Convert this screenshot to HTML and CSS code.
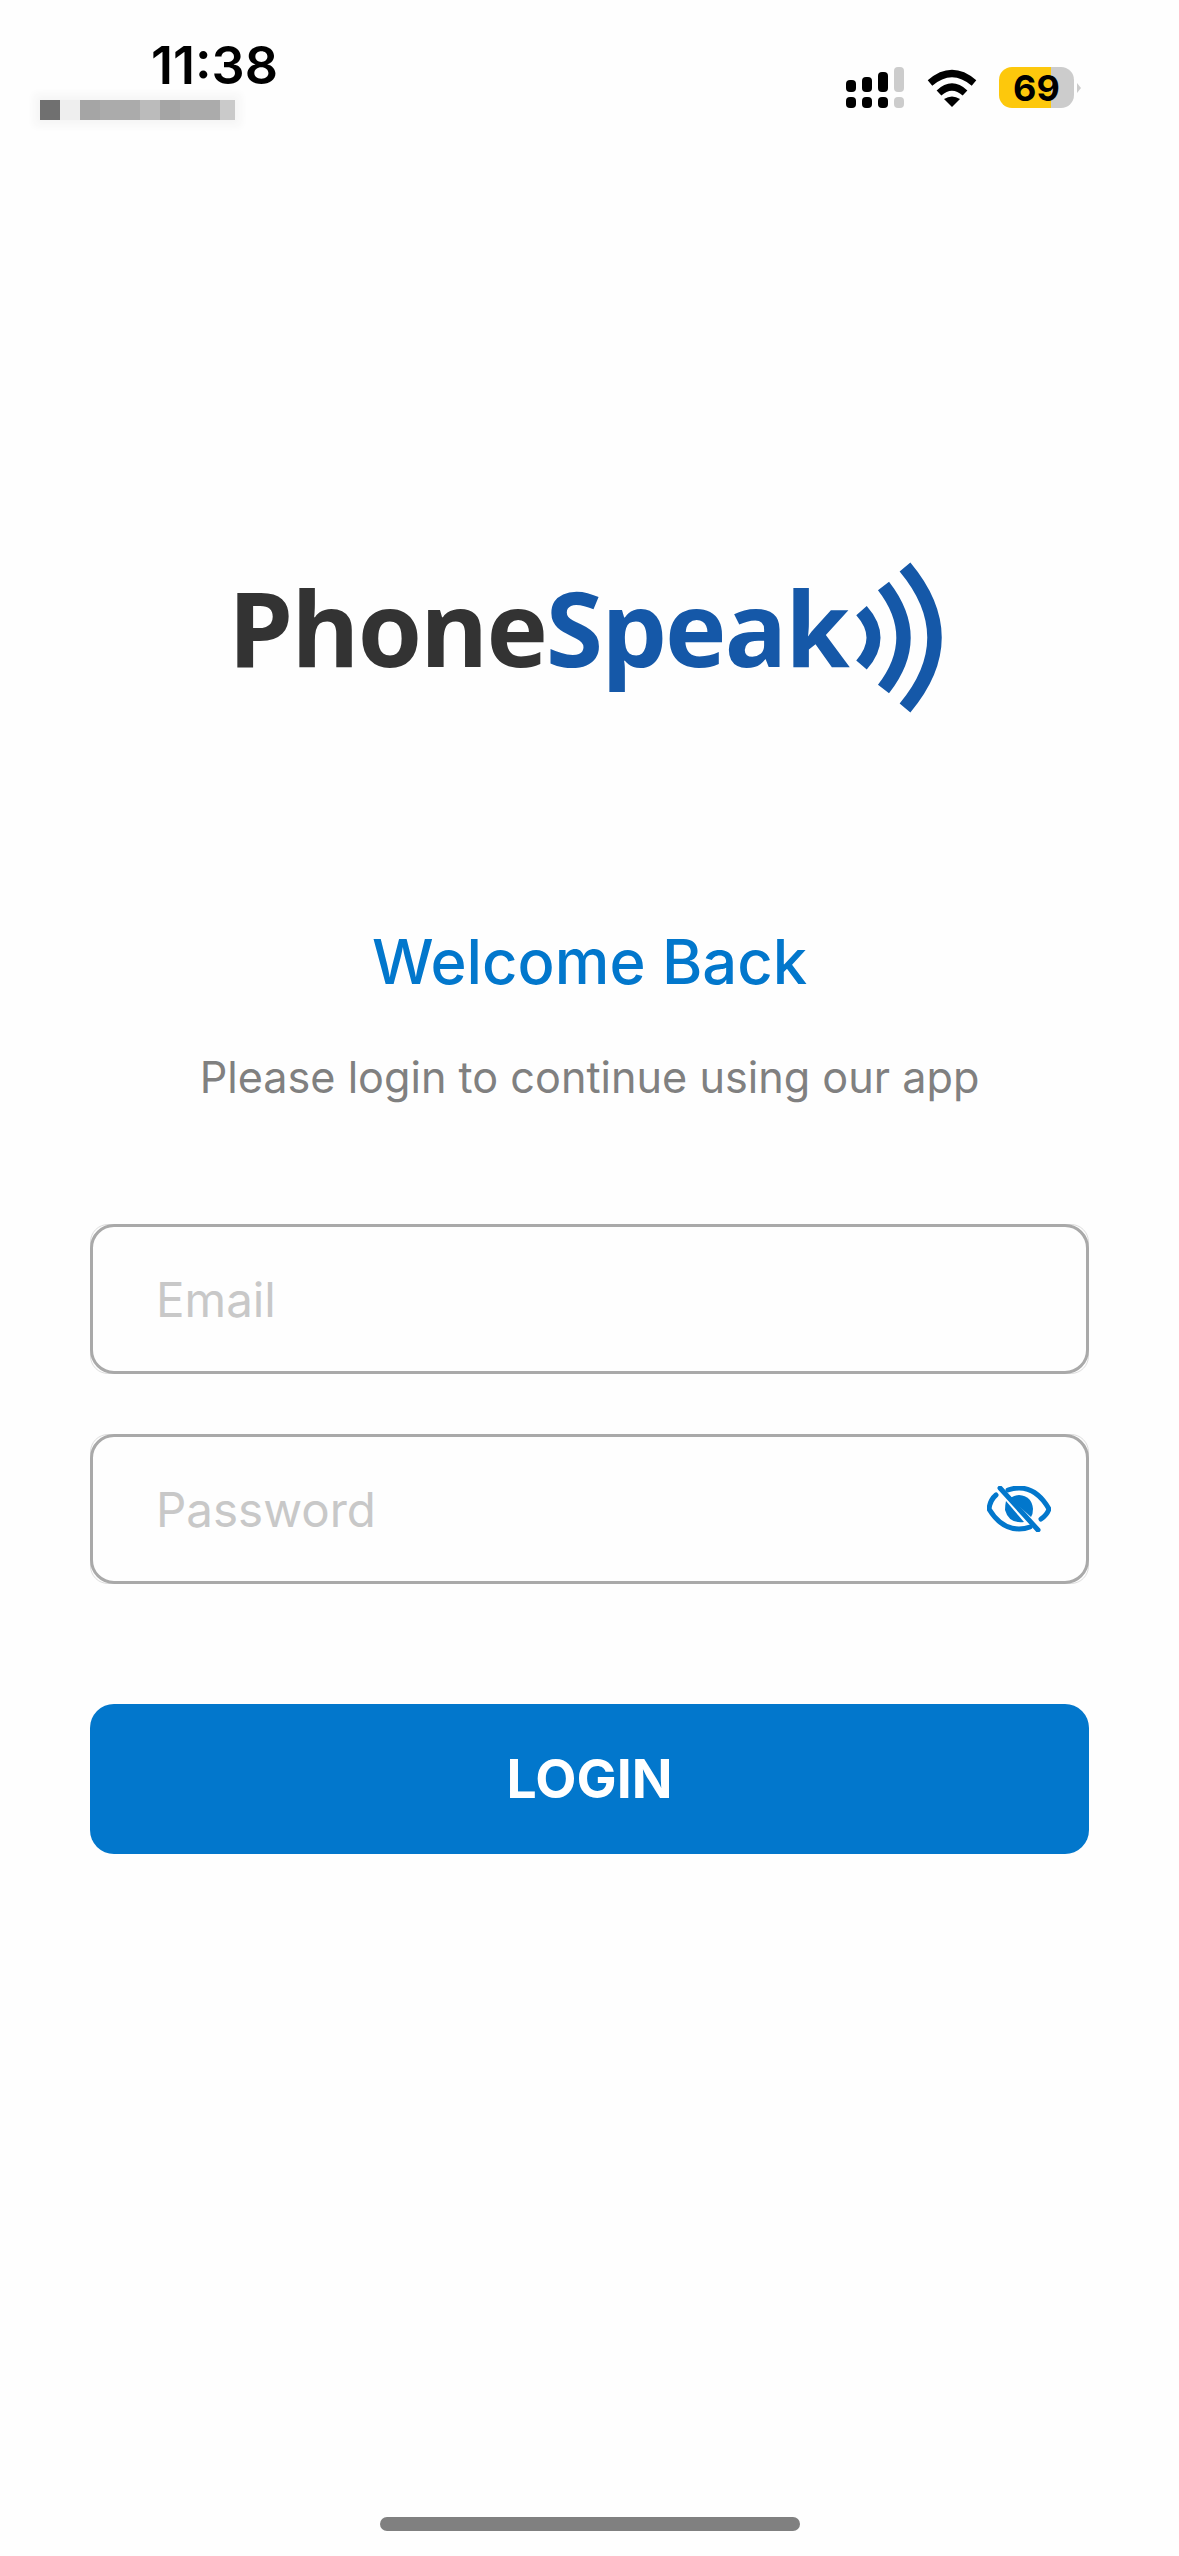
FILE: index.html
```html
<!DOCTYPE html>
<html lang="en">
  <head>
    <meta charset="UTF-8">
    <meta name="viewport" content="width=device-width, initial-scale=1.0">
    <title>Login | PhoneSpeak</title>
    <link rel="stylesheet" href="styles.css">
  </head>
  <body>
    <!-- Status bar -->
    <div class="status-bar">
      <div class="status-left">
        <div class="time">11:38</div>
        <div class="carrier">
          <span class="px px-dark"></span>
          <span class="px px-pale"></span>
          <span class="px px-mid"></span>
          <span class="px px-wide"></span>
          <span class="px px-soft"></span>
          <span class="px px-mid"></span>
          <span class="px px-wide"></span>
          <span class="px px-end"></span>
        </div>
      </div>
      <div class="status-right">
        <svg class="signal" width="58" height="41" viewBox="0 0 58 41">
          <rect x="0" y="13" width="10" height="12" rx="4"/>
          <rect x="16" y="10" width="10" height="15" rx="4"/>
          <rect x="32" y="5" width="10" height="20" rx="4"/>
          <rect x="48" y="0" width="10" height="25" rx="4" fill="#cccccc"/>
          <rect x="0" y="30" width="10" height="11" rx="4"/>
          <rect x="16" y="30" width="10" height="11" rx="4"/>
          <rect x="32" y="30" width="10" height="11" rx="4"/>
          <rect x="48" y="30" width="10" height="11" rx="4" fill="#cccccc"/>
        </svg>
        <svg class="wifi" width="50" height="38" viewBox="0 0 50 38">
          <path d="M3 14 Q25 -5 47 14" fill="none" stroke="#000" stroke-width="7"/>
          <path d="M12 24 Q25 12 38 24" fill="none" stroke="#000" stroke-width="7"/>
          <path d="M17 30 Q25 25 33 30 L25 38 Z"/>
        </svg>
        <div class="battery">
          <div class="battery-body"><span>69</span></div>
          <div class="battery-tip"></div>
        </div>
      </div>
    </div>

    <!-- Logo -->
    <div class="logo">
      <div class="logo-text">Phone<span>Speak</span></div>
      <svg class="logo-waves" width="90" height="156" viewBox="0 0 90 156">
        <path d="M5.5 50.7 Q29.5 77.7 5.5 105"/>
        <path d="M27.5 26 Q67.5 77.7 27.5 129"/>
        <path d="M49 7 Q108 77.7 49 148"/>
      </svg>
    </div>

    <!-- Form -->
    <div class="login">
      <h1>Welcome Back</h1>
      <p>Please login to continue using our app</p>
      <div class="field">
        <input type="text" placeholder="Email">
      </div>
      <div class="field">
        <input type="password" placeholder="Password">
        <svg class="eye" width="64" height="46" viewBox="0 0 64 46">
          <path d="M9 9 Q3 14 2 23 Q14 43 32 43 Q38 43 43 41" fill="none" stroke="#0277cc" stroke-width="5" stroke-linecap="round"/>
          <path d="M21 4 Q27 2 32 2 Q50 2 62 23 Q60 29 54 33" fill="none" stroke="#0277cc" stroke-width="5" stroke-linecap="round"/>
          <path d="M23 12 Q28 9 32 9 Q45 10 46 23 Q46 28 44 31 Z" fill="#0277cc"/>
          <path d="M19 15 L37 36 Q22 38 18 24 Q18 19 19 15 Z" fill="#0277cc"/>
          <path d="M13 2 L51 44" fill="none" stroke="#0277cc" stroke-width="5" stroke-linecap="round"/>
        </svg>
      </div>
      <button class="login-btn">LOGIN</button>
    </div>

    <div class="home-indicator"></div>
  </body>
</html>
```

FILE: styles.css
```css
/* Reset */
* {
  margin: 0;
  padding: 0;
  box-sizing: border-box;
  font-family: 'Inter', sans-serif;
}

body {
  display: flex;
  flex-direction: column;
  min-height: 100vh;
  background-color: #fefefe;
  overflow: hidden;
}

/* Status bar */
.status-bar {
  display: flex;
  justify-content: space-between;
  height: 140px;
}

.status-left {
  padding-top: 41px;
  padding-left: 40px;
}

.time {
  margin-left: 111px;
  font-size: 52px;
  line-height: 50px;
  font-weight: 600;
  color: #000;
}

.carrier {
  display: flex;
  width: 195px;
  margin-top: 9px;
  background-color: #f6f6f6;
  box-shadow: 0 0 8px 6px #f6f6f6;
}

.px {
  height: 20px;
}

.px-dark { width: 20px; background-color: #707070; }
.px-pale { width: 20px; background-color: #eeeeee; }
.px-mid { width: 20px; background-color: #a5a5a5; }
.px-wide { width: 40px; background-color: #ababab; }
.px-soft { width: 20px; background-color: #bbbbbb; }
.px-end { width: 15px; background-color: #cacaca; }

.status-right {
  display: flex;
  align-items: flex-start;
  padding-top: 67px;
  padding-right: 98px;
}

.wifi {
  margin-left: 23px;
  margin-top: 2px;
}

.battery {
  display: flex;
  align-items: center;
  margin-left: 22px;
}

.battery-body {
  display: flex;
  align-items: center;
  justify-content: center;
  width: 75px;
  height: 41px;
  border-radius: 13px;
  background: linear-gradient(to right, #fdc80c 70%, #cccccc 70%);
}

.battery-body span {
  font-size: 36px;
  font-weight: 700;
  color: #000;
}

.battery-tip {
  width: 0;
  height: 0;
  margin-left: 3px;
  border-top: 5px solid transparent;
  border-bottom: 5px solid transparent;
  border-left: 4px solid #cccccc;
}

/* Logo */
.logo {
  display: flex;
  align-items: flex-start;
  height: 156px;
  margin-top: 420px;
  padding-left: 228px;
}

.logo-text {
  width: 628px;
  margin-top: 15px;
  font-family: 'Open Sans', sans-serif;
  font-size: 104px;
  line-height: 104px;
  font-weight: 700;
  letter-spacing: -2px;
  color: #333333;
  white-space: nowrap;
}

.logo-text span {
  font-family: inherit;
  color: #1558a8;
}

.logo-waves {
  flex-shrink: 0;
}

.logo-waves path {
  fill: none;
  stroke: #1558a8;
  stroke-width: 14;
}

/* Form */
.login {
  padding: 0 90px;
}

.login h1 {
  margin-top: 210px;
  text-align: center;
  font-size: 61.5px;
  line-height: 72px;
  font-weight: 500;
  color: #0277cc;
}

.login p {
  margin-top: 54px;
  margin-bottom: 122px;
  text-align: center;
  font-size: 43.2px;
  line-height: 50px;
  color: #808080;
}

.field {
  position: relative;
  display: flex;
  align-items: center;
  height: 150px;
  padding: 0 35px 0 63px;
  border: 3px solid #a9a9a9;
  border-radius: 24px;
}

.field + .field {
  margin-top: 60px;
}

/* pale corner line */
.field::before {
  content: "";
  position: absolute;
  inset: -3px;
  border: 1px solid #dddddd;
  border-radius: 18px;
  z-index: -1;
}

.field input {
  flex: 1;
  min-width: 0;
  border: none;
  outline: none;
  background: transparent;
  font-size: 47.5px;
  color: #333;
}

.field input::placeholder {
  color: #c8c8c8;
  opacity: 1;
}

.login-btn {
  display: block;
  width: 100%;
  height: 150px;
  margin-top: 120px;
  padding-bottom: 2px;
  border: none;
  border-radius: 24px;
  background-color: #0277cc;
  color: #fff;
  font-size: 53.5px;
  font-weight: 700;
  cursor: pointer;
}

/* Home indicator */
.home-indicator {
  width: 420px;
  height: 14px;
  margin: auto auto 25px;
  border-radius: 7px;
  background-color: #808080;
}
```
